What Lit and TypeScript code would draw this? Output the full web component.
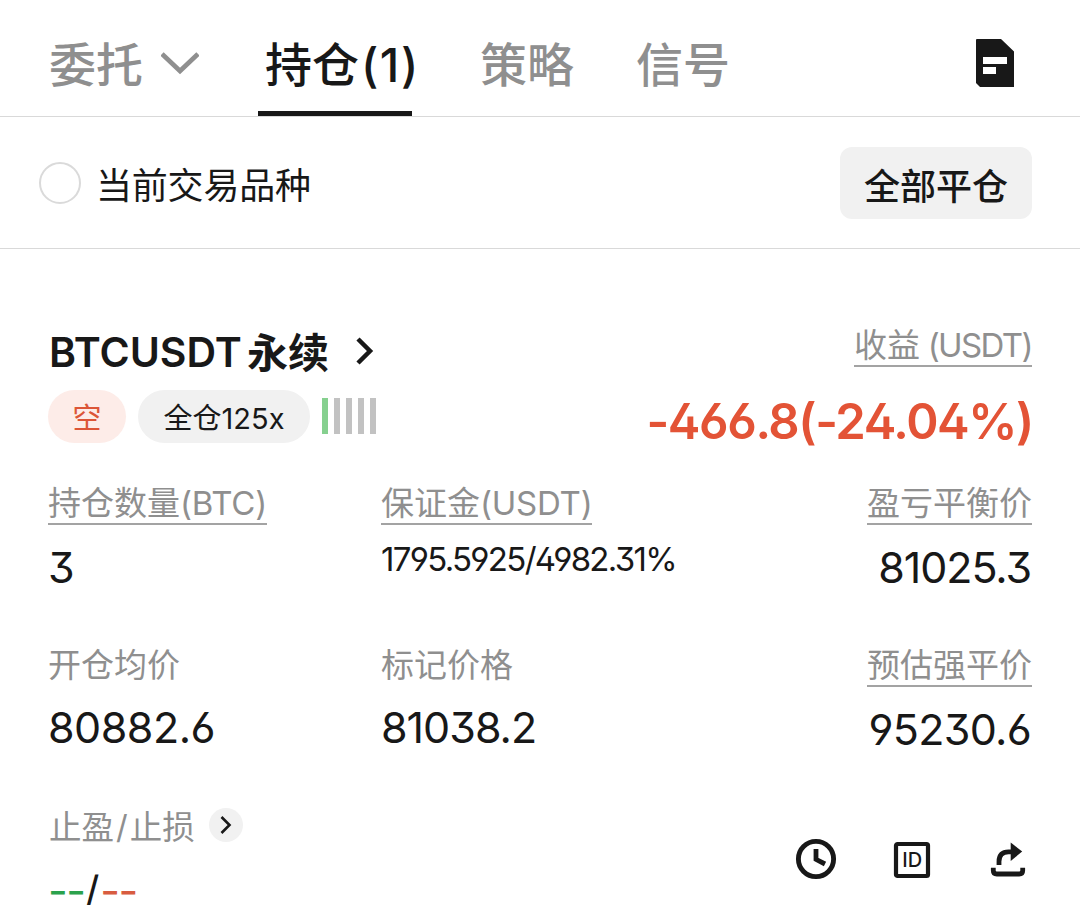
import { LitElement, html, css } from "lit";
import { customElement, property } from "lit/decorators.js";

@customElement("position-metric")
class PositionMetric extends LitElement {
  @property() label = "";
  @property() unit = "";
  @property() value = "";
  @property({ type: Number }) tracking = 0;
  @property({ type: Boolean }) underlined = false;
  @property({ type: Boolean }) small = false;

  static styles = css`
    :host { display: flex; flex-direction: column; align-items: flex-start; }
    :host([end]) { align-items: flex-end; }
    :host([end]) .value { margin-right: 1px; }
    .label { font-size: 33px; line-height: 40px; color: #8f8f8f; white-space: nowrap; }
    .unit { letter-spacing: -0.25px; }
    .underlined { border-bottom: 2px solid #a3a3a3; }
    .value { margin-top: 17px; font-size: 43px; line-height: 50px; color: #181818; white-space: nowrap; }
    .small { margin-top: 9px; font-size: 33px; }
  `;

  render() {
    return html`
      <div class="label ${this.underlined ? "underlined" : ""}">${this.label}<span class="unit">${this.unit}</span></div>
      <div class="value ${this.small ? "small" : ""}" style="letter-spacing:${this.tracking}px">${this.value}</div>
    `;
  }
}

@customElement("app-root")
class AppRoot extends LitElement {
  static styles = css`
    :host { display: block; height: 916px; background: #fff; color: #181818; font-family: Inter, "Noto Sans CJK SC", sans-serif; font-feature-settings: "ss01"; }
    * { box-sizing: border-box; }
    svg { display: block; flex: none; }
    .tabs { display: flex; height: 117px; padding: 0 48px; border-bottom: 1px solid #d9d9d9; font-size: 47px; font-weight: 500; line-height: 130px; color: #8f8f8f; white-space: nowrap; }
    .orders { display: flex; width: 210px; padding-left: 1px; }
    .orders svg { margin: 51px 0 0 18px; }
    .active { width: 154px; height: 116px; padding-left: 7px; border-bottom: 5px solid #181818; color: #181818; }
    .count { margin-left: 2px; letter-spacing: 1.5px; }
    .strategy { margin-left: 68px; width: 156px; }
    .history { margin: 38px 17px 0 auto; }
    .filter { display: flex; align-items: center; height: 132px; padding: 0 48px 0 39px; border-bottom: 1px solid #d9d9d9; }
    .radio { width: 42px; height: 42px; border: 2px solid #dadada; border-radius: 50%; }
    .filter-label { margin: 6px auto 0 15px; font-size: 36px; line-height: 44px; letter-spacing: -0.2px; }
    .close-all { width: 192px; height: 72px; border-radius: 12px; background: #f1f1f1; font-size: 36px; font-weight: 500; line-height: 80px; text-align: center; }
    .card { padding: 76px 48px 0; }
    .head { display: flex; justify-content: space-between; height: 158px; }
    .title { display: flex; align-items: center; height: 54px; padding-left: 1px; font-size: 41px; font-weight: 600; white-space: nowrap; }
    .title svg { margin: 0 0 3px 26px; }
    .cjk { margin: 0 0 4px 5px; font-weight: 700; }
    .tags { display: flex; align-items: center; margin-top: 11px; font-size: 29px; line-height: 57px; text-align: center; }
    .short { width: 78px; height: 53px; border-radius: 27px; background: #fdece8; color: #dc5537; }
    .leverage { width: 172px; height: 53px; margin: 0 12px; border-radius: 27px; background: #f1f1f1; }
    .risk { display: flex; gap: 6px; margin-bottom: 1px; }
    .bar { width: 6px; height: 36px; background: #c2c2c2; }
    .low { background: #86d08f; }
    .profit { display: flex; flex-direction: column; align-items: flex-end; }
    .profit-label { font-size: 33px; line-height: 40px; border-bottom: 2px solid #a3a3a3; color: #8f8f8f; }
    .currency { letter-spacing: -1.6px; }
    .profit-value { margin: 25px -1px 0 0; font-size: 49px; font-weight: 600; line-height: 60px; letter-spacing: -1.4px; color: #e35336; }
    .metrics { display: grid; grid-template-columns: 333px 1fr auto; grid-template-rows: 162px 162px; }
    .foot { display: flex; justify-content: space-between; }
    .stop-label { display: flex; align-items: center; height: 40px; font-size: 32.5px; line-height: 36px; color: #8f8f8f; }
    .stop-text { margin: 1px 0 0 1px; }
    .slash { margin: 0 2px; }
    .go { display: grid; place-items: center; width: 34px; height: 34px; margin: -4px 0 0 14px; border-radius: 50%; background: #f1f1f1; }
    .stop-value { display: flex; margin-top: 28px; font-size: 43px; line-height: 30px; letter-spacing: -1.6px; }
    .divider { margin: -2px 1px 0 2px; font-size: 35px; letter-spacing: 0; font-weight: 500; }
    .up { color: #2ba24c; }
    .down { color: #d85c40; }
    .actions { display: flex; gap: 56px; padding-top: 31px; margin-right: 6px; }
    .share { margin-left: 1px; }
  `;

  render() {
    return html`
      <div class="tabs">
        <div class="orders">委托
          <svg width="38" height="24" viewBox="0 0 38 24"><path d="M1 3 L19 20 L37 3" fill="none" stroke="#8f8f8f" stroke-width="4.8"/></svg>
        </div>
        <div class="active">持仓<span class="count">(1)</span></div>
        <div class="strategy">策略</div>
        <div>信号</div>
        <svg class="history" width="40" height="50" viewBox="0 0 40 50"><path fill="#181818" fill-rule="evenodd" d="M2 1H26L39 13.5V49H5L1 45V2Q1 1 2 1ZM8 19V26H32V19ZM8 29V36H21V29Z"/></svg>
      </div>
      <div class="filter">
        <div class="radio"></div>
        <div class="filter-label">当前交易品种</div>
        <div class="close-all">全部平仓</div>
      </div>
      <div class="card">
        <div class="head">
          <div>
            <div class="title">BTCUSDT<span class="cjk">永续</span>
              <svg width="20" height="28" viewBox="0 0 20 28"><path d="M3 2 L15 14 L3 26" fill="none" stroke="#181818" stroke-width="4.5"/></svg>
            </div>
            <div class="tags">
              <div class="short">空</div>
              <div class="leverage">全仓125x</div>
              <div class="risk"><div class="bar low"></div><div class="bar"></div><div class="bar"></div><div class="bar"></div><div class="bar"></div></div>
            </div>
          </div>
          <div class="profit">
            <div class="profit-label">收益<span class="currency"> (USDT)</span></div>
            <div class="profit-value">-466.8(-24.04%)</div>
          </div>
        </div>
        <div class="metrics">
          <position-metric label="持仓数量" unit="(BTC)" value="3" tracking="-1" underlined></position-metric>
          <position-metric label="保证金" unit="(USDT)" value="1795.5925/4982.31%" tracking="-1.7" underlined small></position-metric>
          <position-metric label="盈亏平衡价" value="81025.3" tracking="-1.1" underlined end></position-metric>
          <position-metric label="开仓均价" value="80882.6" tracking="-0.5"></position-metric>
          <position-metric label="标记价格" value="81038.2" tracking="-1"></position-metric>
          <position-metric label="预估强平价" value="95230.6" tracking="-0.7" underlined end></position-metric>
        </div>
        <div class="foot">
          <div>
            <div class="stop-label"><span class="stop-text">止盈<span class="slash">/</span>止损</span>
              <div class="go"><svg width="12" height="18" viewBox="0 0 12 18"><path d="M1.5 1 L9.5 9 L1.5 17" fill="none" stroke="#181818" stroke-width="2.6"/></svg></div>
            </div>
            <div class="stop-value"><span class="up">--</span><span class="divider">/</span><span class="down">--</span></div>
          </div>
          <div class="actions">
            <svg width="42" height="42" viewBox="0 0 42 42"><circle cx="21" cy="21" r="17.6" fill="none" stroke="#181818" stroke-width="4.9"/><path d="M21 11V21.3L30 26" fill="none" stroke="#181818" stroke-width="4.8"/></svg>
            <svg width="38" height="42" viewBox="0 0 38 42"><rect x="3" y="6" width="32" height="32" rx="1.5" fill="none" stroke="#181818" stroke-width="4.2"/><text x="19.3" y="28.7" text-anchor="middle" font-size="20" font-weight="500" fill="#181818">ID</text></svg>
            <svg class="share" width="38" height="42" viewBox="0 0 38 42"><path d="M11 27V23.5Q11 13.8 20.5 13.8H24M5.3 29.7V32.5Q5.3 36 8.8 36H31.2Q34.7 36 34.7 32.5V29.7" fill="none" stroke="#181818" stroke-width="4.8"/><path d="M22.7 4.5 34.2 13.5 22.7 23Z" fill="#181818"/></svg>
          </div>
        </div>
      </div>
    `;
  }
}
